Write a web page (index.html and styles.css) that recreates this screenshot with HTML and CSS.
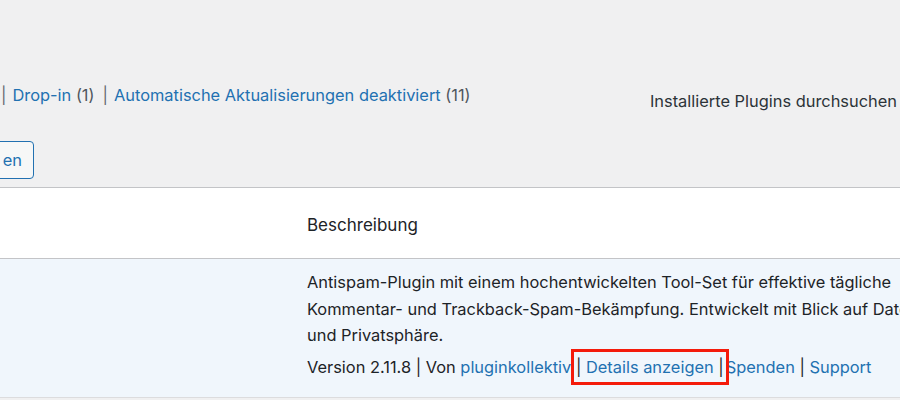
FILE: index.html
```html
<!DOCTYPE html>
<html lang="de">
<head>
<meta charset="utf-8">
<link rel="stylesheet" href="styles.css">
</head>
<body>
<div class="top">
  <div class="filters">
    <ul class="subsubsub">
      <li><span class="sep">|</span><a href="#">Drop-in</a> <span class="count">(1)</span></li>
      <li><span class="sep">|</span><a href="#">Automatische Aktualisierungen deaktiviert</a> <span class="count">(11)</span></li>
    </ul>
    <label class="search-label">Installierte Plugins durchsuchen</label>
  </div>
  <div class="actions">
    <button class="btn">en</button>
  </div>
</div>
<table class="plugins">
  <thead>
    <tr><th class="col-name"></th><th class="col-desc">Beschreibung</th></tr>
  </thead>
  <tbody>
    <tr class="active">
      <td class="col-name"></td>
      <td class="col-desc">
        <div class="desc-wrap">
          <p class="desc">Antispam-Plugin mit einem hochentwickelten Tool-Set für effektive tägliche<br>Kommentar- und Trackback-Spam-Bekämpfung. Entwickelt mit Blick auf Datenschutz<br>und Privatsphäre.</p>
          <p class="meta">Version 2.11.8 | Von <a href="#">pluginkollektiv</a> <span class="hl">| <a href="#">Details anzeigen</a> |</span><a href="#">Spenden</a> | <a href="#">Support</a></p>
        </div>
      </td>
    </tr>
  </tbody>
</table>
</body>
</html>
```
FILE: styles.css
```css
html, body {
  margin: 0;
  padding: 0;
  background: #f0f0f1;
  width: 900px;
  height: 400px;
  overflow: hidden;
  font-family: Inter, "Liberation Sans", Arial, sans-serif;
  font-size: 16.4px;
  color: #1d2327;
}
a { color: #2271b1; text-decoration: none; }
.top {
  height: 187px;
  box-sizing: border-box;
  padding-top: 84px;
}
.filters {
  display: flex;
  justify-content: space-between;
  align-items: flex-start;
}
.subsubsub {
  list-style: none;
  margin: 0;
  padding: 0;
  display: flex;
  color: #50575e;
  line-height: 22px;
}
.subsubsub li { white-space: nowrap; }
.sep { color: #646970; margin: 0 6px 0 1px; }
.subsubsub li + li .sep { margin-left: 8px; }
.count { color: #50575e; }
.search-label {
  margin-top: 6px;
  margin-right: 3px;
  line-height: 22px;
  color: #2c3338;
}
.actions {
  margin-top: 29px;
  display: flex;
}
.btn {
  margin-left: -20px;
  height: 38px;
  width: 54px;
  padding: 0 11px 0 0;
  text-align: right;
  border: 1px solid #2271b1;
  border-radius: 4px;
  background: #f6f7f7;
  color: #2271b1;
  font: inherit;
}
.plugins {
  width: 100%;
  table-layout: fixed;
  border-collapse: collapse;
  background: #fff;
  border-top: 1px solid #c3c4c7;
}
.plugins th {
  text-align: left;
  font-weight: normal;
  font-size: 17px;
  height: 66px;
  padding: 0;
  border-bottom: 1px solid #c3c4c7;
  color: #1d2327;
}
.col-name { width: 307px; padding: 0; }
.plugins th.col-desc { padding-top: 4px; }
.active { background: #f0f6fc; }
.active td {
  padding: 0;
  vertical-align: top;
  border-bottom: 1px solid #dcdcde;
  height: 139px;
  box-sizing: border-box;
}
.desc-wrap { overflow: hidden; }
.desc {
  margin: 10px 0 0;
  line-height: 26.5px;
  white-space: nowrap;
}
.meta {
  margin: 0;
  padding: 5px 0;
  line-height: 26px;
  white-space: nowrap;
}
.hl {
  outline: 3px solid #f41b0b;
  padding: 5px 2px;
  margin-left: -2px;
}
```
